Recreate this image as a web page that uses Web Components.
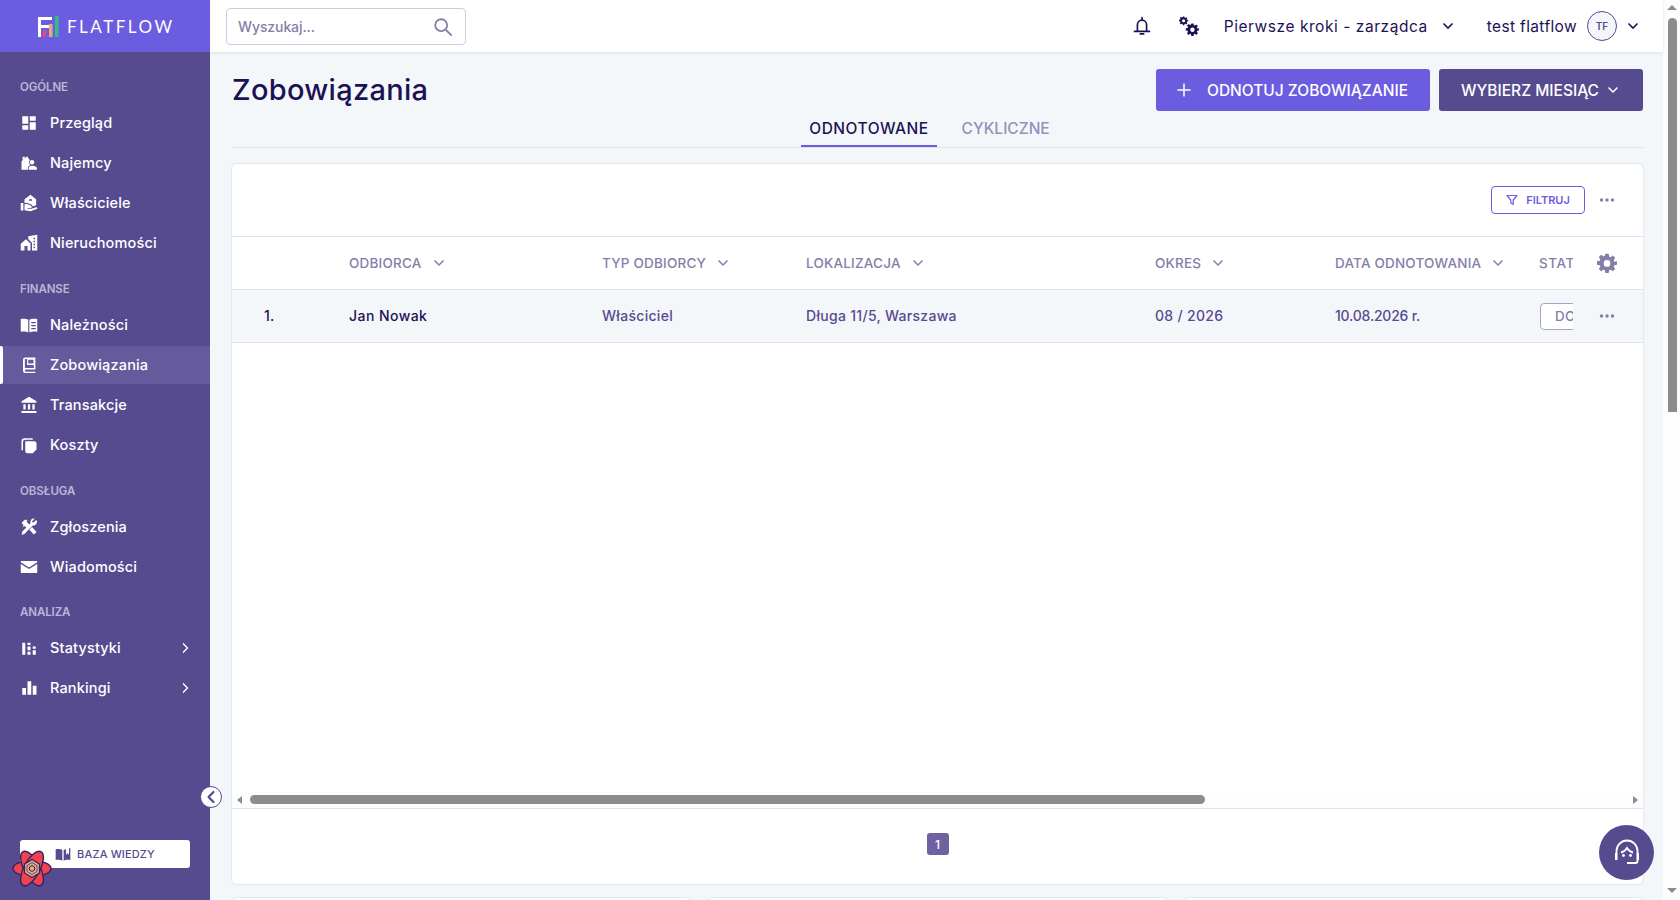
<!DOCTYPE html>
<html lang="pl">
<head>
<meta charset="utf-8">
<title>Zobowiązania</title>
<style>
  html, body { margin: 0; height: 100%; overflow: hidden; }
  body { font-family: Inter, "Liberation Sans", sans-serif; color: #1d1155; background: #f4f7fa; }
</style>
</head>
<body>
<ff-app>
  <ff-sidebar slot="side">
    <ff-nav-section label="OGÓLNE">
      <ff-nav-item icon="dash">Przegląd</ff-nav-item>
      <ff-nav-item icon="tenant">Najemcy</ff-nav-item>
      <ff-nav-item icon="owner">Właściciele</ff-nav-item>
      <ff-nav-item icon="estate">Nieruchomości</ff-nav-item>
    </ff-nav-section>
    <ff-nav-section label="FINANSE">
      <ff-nav-item icon="book">Należności</ff-nav-item>
      <ff-nav-item icon="ledger" active>Zobowiązania</ff-nav-item>
      <ff-nav-item icon="bank">Transakcje</ff-nav-item>
      <ff-nav-item icon="copy">Koszty</ff-nav-item>
    </ff-nav-section>
    <ff-nav-section label="OBSŁUGA" style="margin-bottom:17px">
      <ff-nav-item icon="tools">Zgłoszenia</ff-nav-item>
      <ff-nav-item icon="mail">Wiadomości</ff-nav-item>
    </ff-nav-section>
    <ff-nav-section label="ANALIZA">
      <ff-nav-item icon="stats" more>Statystyki</ff-nav-item>
      <ff-nav-item icon="rank" more>Rankingi</ff-nav-item>
    </ff-nav-section>
  </ff-sidebar>
  <ff-topbar slot="top"></ff-topbar>
  <ff-page-head slot="main" title="Zobowiązania"></ff-page-head>
  <ff-table-card slot="main"></ff-table-card>
  <ff-lower-cards slot="main"></ff-lower-cards>
</ff-app>
<ff-help-button></ff-help-button>

<script>
// shared icon paths, all on a 24x24 box
const GEAR = 'M10 1h4l.6 3.200 1.800.8 2.700-1.900 2.800 2.800-1.900 2.700.8 1.800L24 10v4l-3.200.6-.8 1.800 1.900 2.700-2.800 2.800-2.700-1.900-1.800.8L14 24h-4l-.6-3.200-1.800-.8-2.700 1.900-2.800-2.800 1.900-2.700-.8-1.800L0 14v-4l3.200-.6.8-1.800-1.900-2.700 2.800-2.800 2.700 1.900 1.800-.8zM12 8.500a4 4 0 1 0 0 8 4 4 0 0 0 0-8z';
const ICONS = {
  dash: '<path d="M3 3h8v10H3zM13 3h8v6h-8zM13 11h8v10h-8zM3 15h8v6H3z"/>',
  tenant: '<path d="M9.500 3 2 9.500V21h8.500v-2.500c0-2 1.800-3.400 3.400-4a4 4 0 0 1-2-3.500c0-1.100.4-2.100 1.100-2.800z"/><path d="M3.500 3.500h3v2.500l-3 2.500z"/><circle cx="16" cy="11" r="3"/><path d="M11.500 21v-2.500c0-2 2.500-3 4.500-3s6.500 1 6.500 3V21z"/>',
  owner: '<path d="M14 1 6 7v5l3-.5 6 2.500c1.200.6 1.600 1.500 1.500 2.500l5-1.500V7z"/><path d="M1 12h3.500v10H1zM6 13.500v8l8 1.500 9-3.500c0-1.500-1-2-2.500-1.500l-5.500 1.500H10v-1h4.500c1.500 0 1.500-2.500.3-3L9 13z"/><path fill="#574b90" d="M12 7h4v2h-4z"/>',
  estate: '<path d="M8 7 1 13v9h5v-6h4v6h4v-9.500z"/><path d="M11 6.500V3l12-2v21h-7V12zM18 5v2h2V5zM18 9v2h2V9zM18 13v2h2v-2zM18 17v2h2v-2z" fill-rule="evenodd"/>',
  book: '<path d="M11 5C8.500 3.500 4 3.200 1 4v17c3-.8 7.500-.5 10 1z"/><path fill-rule="evenodd" d="M12.500 5C15 3.500 20 3.200 23 4v17c-3-.8-8-.5-10.500 1zM15 8v1.500h6V8zM15 12v1.500h6V12zM15 16v1.500h6V16z"/>',
  ledger: '<path fill-rule="evenodd" d="M7 2h13.500v16H8a1.300 1.300 0 0 0 0 3h12.500v1.500H7a3 3 0 0 1-3-3V5a3 3 0 0 1 3-3zm4 3v5h7V5zM6.500 4v12.200c.4-.1.800-.2 1.500-.2h10.500v-4h-9V4z"/>',
  bank: '<path d="M12 1 2 7v2h20V7zM4.500 11v7h3v-7zM10.500 11v7h3v-7zM16.500 11v7h3v-7zM2 20h20v2.500H2z"/>',
  copy: '<path d="M8 7h11a3 3 0 0 1 3 3v8l-5 5H10a3 3 0 0 1-3-3V8a1 1 0 0 1 1-1z"/><path d="M6 3h11v2H7a3 3 0 0 0-3 3v11H2V7a4 4 0 0 1 4-4z"/>',
  tools: '<path d="M6.500 2 2 6.500l3 3L3.500 11l1 1L6 10.500l1.800 1.800L9.500 13.800l4-4-5-5L10 3.500 8.500 2 7.500 3z"/><path d="M12.500 15.500 16 12l6 6.500L18.500 22z"/><path d="M21.500 2.500 18 6l-1.500-.2-.3-1.500L19.500 1c-2.700-.8-6 1.300-5.700 4.700.1.700.2 1 .2 1.300L2.500 18.500 5.500 21.500 17 10c3.500.7 6-2.700 5.500-6z" /><path d="M3 18.500 5.500 22 2 22z"/>',
  mail: '<path d="M2 4h20c.6 0 1 .4 1 1v.7l-11 6.800L1 5.700V5c0-.6.400-1 1-1zM1 8l11 6.800L23 8v11c0 .6-.4 1-1 1H2c-.6 0-1-.4-1-1z"/>',
  stats: '<path d="M3 5h4v16H3zM10 10h4v5h-4zM10 17h4v4h-4zM10 5h4v3h-4zM17 10h4v3h-4zM17 15h4v6h-4z"/>',
  rank: '<path d="M3 12h5v9H3zM10 3h5v18h-5zM17 9h5v12h-5z"/>'
};

class FFApp extends HTMLElement {
  constructor() {
    super();
    this.attachShadow({ mode: 'open' });
    this.shadowRoot.innerHTML = `
      <style>
        :host { display: flex; width: 100vw; height: 900px; overflow: hidden; }
        #col { flex: 1; min-width: 0; display: flex; flex-direction: column; }
        main { flex: 1; min-height: 0; overflow: hidden; padding: 17px 20px 0 22px; }
      </style>
      <slot name="side"></slot>
      <div id="col">
        <slot name="top"></slot>
        <main><slot name="main"></slot></main>
      </div>
      <ff-page-scrollbar></ff-page-scrollbar>
    `;
  }
}

class FFSidebar extends HTMLElement {
  constructor() {
    super();
    this.attachShadow({ mode: 'open' });
    this.shadowRoot.innerHTML = `
      <style>
        :host { display: flex; flex-direction: column; position: relative; flex: 0 0 210px; width: 210px; height: 900px;
          background: #574b90; color: #fff; z-index: 2; }
        #logo { flex: 0 0 52px; background: #6c5ce0; display: flex; align-items: center; padding-left: 38px; gap: 8px; }
        #logo span { font: 400 17px Lato, Inter, sans-serif; letter-spacing: 2.500px; color: #fff; }
        nav { flex: 1; padding-top: 27px; }
        #kb { position: absolute; left: 20px; top: 840px; width: 170px; height: 28px; box-sizing: border-box; background: #fff; border-radius: 3px;
          display: flex; align-items: center; justify-content: center; gap: 6px; padding-left: 0; color: #574b90;
          font-size: 11px; font-weight: 500; letter-spacing: .15px; }
        #kb svg { width: 16px; height: 16px; fill: #574b90; }
        #atom { position: absolute; left: 12px; top: 850px; width: 40px; height: 37px; }
        #collapse { position: absolute; left: 200px; top: 786px; width: 22px; height: 22px; box-sizing: border-box; border-radius: 50%;
          background: #fff; border: 1.500px solid #574b90; display: flex; align-items: center; justify-content: center; }
      </style>
      <div id="logo">
        <svg width="21" height="21" viewBox="0 0 21 21">
          <path fill="#fff" d="M0 1h14v3H3v5h9v3H3v9H0z"/>
          <rect x="5" y="14" width="3" height="7" fill="#ef4860"/>
          <rect x="11" y="8" width="3.500" height="13" fill="#e9a97c"/>
          <rect x="17" y="0" width="3.500" height="21" fill="#2fc08a"/>
        </svg>
        <span>FLATFLOW</span>
      </div>
      <nav><slot></slot></nav>
      <div id="collapse">
        <svg width="12" height="14" viewBox="0 0 12 14"><path d="M8.500 2 3.500 7l5 5" fill="none" stroke="#574b90" stroke-width="2.200" stroke-linecap="round" stroke-linejoin="round"/></svg>
      </div>
      <div id="kb">
        <svg viewBox="0 0 24 24"><path d="M11 6C8.500 4.500 4 4.200 1 5v16c3-.8 7.500-.5 10 1z"/><path d="M13 6c1-.6 2.200-1 3.500-1.300V13l2.500-2 2 2V3.500h2V21c-3-.8-7.500-.5-10 1z"/></svg>
        <span>BAZA WIEDZY</span>
      </div>
      <svg id="atom" viewBox="0 0 40 37">
        <g stroke="#2a2466" stroke-width="1.400" fill="#f2414f" stroke-linejoin="round">
          <ellipse cx="20" cy="18.500" rx="19" ry="8" transform="rotate(0 20 18.500)"/>
          <ellipse cx="20" cy="18.500" rx="19" ry="8" transform="rotate(62 20 18.500)"/>
          <ellipse cx="20" cy="18.500" rx="19" ry="8" transform="rotate(-62 20 18.500)"/>
        </g>
        <g fill="#f2414f"><circle cx="20" cy="18.500" r="8"/></g>
        <g fill="none" stroke="#2a2466">
          <path d="M20 9.500l7.500 4.500v9L20 27.500 12.500 23v-9z" fill="#e9a97c" stroke-width="1.200"/>
          <path d="M20 12.500l5 3v6l-5 3-5-3v-6z" stroke="#574b90"/>
          <path d="M20 15.500l2.500 1.500v3L20 21.500 17.500 20v-3z" stroke-width="1"/>
        </g>
      </svg>
    `;
  }
}

class FFNavSection extends HTMLElement {
  constructor() {
    super();
    this.attachShadow({ mode: 'open' });
    this.shadowRoot.innerHTML = `
      <style>
        :host { display: block; margin-bottom: 18px; }
        h6 { margin: 0 0 8px; padding-left: 20px; height: 16px; line-height: 16px; font-size: 11.500px; font-weight: 600;
          color: #bcb6d6; letter-spacing: -.1px; }
      </style>
      <h6></h6>
      <slot></slot>
    `;
  }
  connectedCallback() {
    this.shadowRoot.querySelector('h6').textContent = this.getAttribute('label');
  }
}

class FFNavItem extends HTMLElement {
  constructor() {
    super();
    this.attachShadow({ mode: 'open' });
    this.shadowRoot.innerHTML = `
      <style>
        :host { display: block; height: 40px; }
        a { position: relative; display: flex; align-items: center; height: 100%; padding: 0 20px 1px; font-size: 14.500px; font-weight: 500; letter-spacing: .15px; color: #fff; box-sizing: border-box; }
        svg.ic { flex: 0 0 18px; width: 18px; height: 18px; fill: #fff; margin-right: 12px; }
        span { flex: 1; }
        svg.more { width: 8px; height: 12px; margin-right: 1px; }
        :host([active]) a::before { content: ''; position: absolute; left: 0; right: 0; background: #655a9c; top: 1px; bottom: 1px; }
        :host([active]) a::after { content: ''; position: absolute; left: 0; top: 1px; bottom: 1px; width: 3px; background: #fff; border-radius: 0 2px 2px 0; }
        svg, span { position: relative; z-index: 1; }
      </style>
      <a>
        <svg class="ic" viewBox="0 0 24 24"></svg>
        <span><slot></slot></span>
      </a>
    `;
  }
  connectedCallback() {
    this.shadowRoot.querySelector('svg.ic').innerHTML = ICONS[this.getAttribute('icon')] || '';
    if (this.hasAttribute('more')) {
      this.shadowRoot.querySelector('a').insertAdjacentHTML('beforeend',
        '<svg class="more" viewBox="0 0 8 12"><path d="M2 1.500 6.500 6 2 10.500" fill="none" stroke="#fff" stroke-width="1.400"/></svg>');
    }
  }
}

class FFTopbar extends HTMLElement {
  constructor() {
    super();
    this.attachShadow({ mode: 'open' });
    this.shadowRoot.innerHTML = `
      <style>
        :host { display: flex; align-items: center; flex: 0 0 52px; height: 52px; background: #fff; box-shadow: 0 1px 3px rgba(60,50,110,.12);
          position: relative; z-index: 1; padding: 0 24px 0 16px; font-size: 15.500px; color: #1d1155; box-sizing: border-box; }
        #search { width: 240px; height: 37px; margin-top: 1px; box-sizing: border-box; border: 1px solid #cfcbe2; border-radius: 4px; display: flex; align-items: center;
          justify-content: space-between; padding: 0 11px; color: #857ea8; font-size: 14px; font-weight: 500; letter-spacing: -.1px; }
        #search svg { display: block; width: 22px; height: 22px; }
        #right { margin-left: auto; display: flex; align-items: center; letter-spacing: .35px; }
        .chev { display: block; width: 12px; height: 8px; }
        #bell { width: 20px; height: 20px; display: block; margin-right: 27px; }
        #gears { width: 20px; height: 20px; display: block; margin-right: 25px; fill: #1d1155; }
        #ctx { margin-right: 14px; white-space: nowrap; letter-spacing: .55px; }
        #user { margin-left: 33px; white-space: nowrap; }
        #avatar { width: 30px; height: 30px; box-sizing: border-box; margin: 0 10px; border-radius: 50%; border: 1px solid #574b90; background: #f4f7fa;
          display: flex; align-items: center; justify-content: center; font-size: 10px; font-weight: 600; color: #574b90; letter-spacing: 0; }
      </style>
      <div id="search"><span>Wyszukaj...</span>
        <svg viewBox="0 0 24 24" fill="none" stroke="#857ea8" stroke-width="2"><circle cx="10" cy="10" r="6.500"/><path d="m15 15 6.500 6.500"/></svg>
      </div>
      <div id="right">
        <svg id="bell" viewBox="0 0 24 24" fill="none" stroke="#1d1155" stroke-width="2"><path d="M6.500 18v-7.500a5.500 5.500 0 0 1 11 0V18M3 18.500h18" stroke-linecap="round"/><path d="M10 21.500h4M12 2v3" stroke-linecap="round"/></svg>
        <svg id="gears" viewBox="0 0 24 24">
          <path fill-rule="evenodd" transform="translate(0 0) scale(.46)" d="${GEAR}"/>
          <path fill-rule="evenodd" transform="translate(8.200 8.200) scale(.66)" d="${GEAR}"/>
        </svg>
        <span id="ctx">Pierwsze kroki - zarządca</span>
        <svg class="chev" viewBox="0 0 12 8"><path d="M1.500 1.500 6 6l4.500-4.500" fill="none" stroke="#1d1155" stroke-width="1.600"/></svg>
        <span id="user">test flatflow</span>
        <div id="avatar">TF</div>
        <svg class="chev" viewBox="0 0 12 8"><path d="M1.500 1.500 6 6l4.500-4.500" fill="none" stroke="#1d1155" stroke-width="1.600"/></svg>
      </div>
    `;
  }
}

class FFPageHead extends HTMLElement {
  constructor() {
    super();
    this.attachShadow({ mode: 'open' });
    this.shadowRoot.innerHTML = `
      <style>
        :host { display: block; border-bottom: 1px solid #dfe0ea; }
        #row { display: flex; align-items: center; justify-content: space-between; height: 42px; }
        h1 { margin: 0; font-size: 29px; font-weight: 500; color: #1d1155; letter-spacing: .3px; position: relative; top: -1px; }
        #btns { display: flex; gap: 9px; }
        .btn { height: 42px; box-sizing: border-box; border-radius: 3px; color: #fff; display: flex; align-items: center; font-size: 15.500px; font-weight: 500; white-space: nowrap; }
        #add { width: 274px; background: #6c5ce0; padding-left: 20px; gap: 15px; }
        #month { width: 204px; background: #574b90; padding-left: 22px; gap: 8px; }
        nav { display: flex; justify-content: center; height: 36px; gap: 17px; padding-right: 16px; }
        .tab { padding: 0 8px; height: 36px; box-sizing: border-box; line-height: 36px; font-size: 15.500px; font-weight: 500; color: #998fb8; }
        .tab.on { color: #1d1155; border-bottom: 2px solid #6c5ce0; letter-spacing: .5px; }
      </style>
      <div id="row">
        <h1></h1>
        <div id="btns">
          <div class="btn" id="add">
            <svg width="16" height="16" viewBox="0 0 16 16"><path d="M8 1.500v13M1.500 8h13" stroke="#fff" stroke-width="1.500"/></svg>
            <span>ODNOTUJ ZOBOWIĄZANIE</span>
          </div>
          <div class="btn" id="month">
            <span>WYBIERZ MIESIĄC</span>
            <svg width="12" height="8" viewBox="0 0 12 8"><path d="M1.500 1.500 6 6l4.500-4.500" fill="none" stroke="#fff" stroke-width="1.500"/></svg>
          </div>
        </div>
      </div>
      <nav>
        <div class="tab on">ODNOTOWANE</div>
        <div class="tab">CYKLICZNE</div>
      </nav>
    `;
  }
  connectedCallback() {
    this.shadowRoot.querySelector('h1').textContent = this.getAttribute('title');
  }
}

const COLS = '117px 253px 204px 349px 180px 204px 34px 70px';
const DOTS = '<svg width="16" height="4" viewBox="0 0 16 4" fill="#857ea8"><circle cx="2.500" cy="2" r="1.700"/><circle cx="8" cy="2" r="1.700"/><circle cx="13.500" cy="2" r="1.700"/></svg>';
const CHEV = '<svg width="12" height="8" viewBox="0 0 12 8"><path d="M1.500 1.500 6 6l4.500-4.500" fill="none" stroke="#857ea8" stroke-width="1.500"/></svg>';

class FFTableCard extends HTMLElement {
  constructor() {
    super();
    this.attachShadow({ mode: 'open' });
    this.shadowRoot.innerHTML = `
      <style>
        :host { display: flex; flex-direction: column; height: 720px; box-sizing: border-box; margin-top: 16px; background: #fff; border-radius: 5px;
          box-shadow: 0 0 2px rgba(60,50,110,.25); overflow: hidden; }
        #tools { flex: 0 0 72px; display: flex; align-items: center; justify-content: flex-end; padding-right: 28px; gap: 14px; box-sizing: border-box; }
        #filter { width: 94px; height: 28px; box-sizing: border-box; border: 1px solid #6c5ce0; border-radius: 4px; color: #6c5ce0; font-size: 11px; font-weight: 600;
          display: flex; align-items: center; justify-content: center; gap: 8px; }
        .row { display: grid; grid-template-columns: ${COLS}; align-items: center; border-top: 1px solid #e2e1ec; box-sizing: border-box; }
        #head { height: 53px; font-size: 13.500px; font-weight: 500; letter-spacing: .2px; color: #857ea8; }
        #head > div { display: flex; align-items: center; gap: 11px; white-space: nowrap; }
        #head > div.clip { letter-spacing: .6px; }
        #body { background: #f4f7fa; border-bottom: 1px solid #e2e1ec; font-size: 14px; font-weight: 500; letter-spacing: .3px; color: #574b90; height: 54px; }
        #body > div:not(.clip):not(.act) { padding-bottom: 2px; }
        .num { padding-left: 32px; color: #1d1155; }
        .name { color: #1d1155; letter-spacing: .45px; }
        .date { letter-spacing: -.2px; }
        .clip { overflow: hidden; }
        #badge { width: 60px; height: 27px; box-sizing: border-box; border: 1px solid #a9a4c4; border-radius: 4px 0 0 4px; background: #fff; color: #857ea8; font-size: 13.500px;
          display: flex; align-items: center; padding-left: 14px; }
        .act { display: flex; justify-content: flex-start; padding-left: 26px; }
        .act.gear { padding-left: 24px; }
        #space { flex: 1; }
        #pager { flex: 0 0 76px; box-sizing: border-box; border-top: 1px solid #e2e1ec; padding-bottom: 5px; display: flex; align-items: center; justify-content: center; }
        #pg { width: 22px; height: 22px; border-radius: 3px; background: #6f619f; color: #fff; font-size: 12px; font-weight: 500;
          display: flex; align-items: center; justify-content: center; }
      </style>
      <div id="tools">
        <div id="filter">
          <svg width="12" height="12" viewBox="0 0 12 12"><path d="M1 1.500h10L7.200 6v4.500L4.800 9V6z" fill="none" stroke="#6c5ce0" stroke-width="1.200" stroke-linejoin="round"/></svg>
          FILTRUJ
        </div>
        ${DOTS}
      </div>
      <div class="row" id="head">
        <div></div>
        <div>ODBIORCA ${CHEV}</div>
        <div>TYP ODBIORCY ${CHEV}</div>
        <div>LOKALIZACJA ${CHEV}</div>
        <div>OKRES ${CHEV}</div>
        <div>DATA ODNOTOWANIA ${CHEV}</div>
        <div class="clip">STATUS</div>
        <div class="act gear"><svg width="20" height="20" viewBox="0 0 24 24" fill="#857ea8"><path fill-rule="evenodd" d="${GEAR}"/></svg></div>
      </div>
      <div class="row" id="body">
        <div class="num">1.</div>
        <div class="name">Jan Nowak</div>
        <div>Właściciel</div>
        <div>Długa 11/5, Warszawa</div>
        <div>08 / 2026</div>
        <div class="date">10.08.2026 r.</div>
        <div class="clip" style="margin-left:1px"><div id="badge">DO</div></div>
        <div class="act">${DOTS}</div>
      </div>
      <div id="space"></div>
      <ff-h-scrollbar></ff-h-scrollbar>
      <div id="pager"><div id="pg">1</div></div>
    `;
  }
}

class FFHScrollbar extends HTMLElement {
  constructor() {
    super();
    this.attachShadow({ mode: 'open' });
    this.shadowRoot.innerHTML = `
      <style>
        :host { display: flex; align-items: center; flex: 0 0 17px; height: 17px; background: #fdfdfd; padding: 0 5px; box-sizing: border-box; }
        #thumb { height: 9px; width: 955px; margin-left: 8px; border-radius: 5px; background: #8c8c8c; }
        .l { width: 0; height: 0; border: 4px solid transparent; border-left: 0; border-right: 5px solid #8c8c8c; }
        .r { width: 0; height: 0; border: 4px solid transparent; border-right: 0; border-left: 5px solid #8c8c8c; margin-left: auto; }
      </style>
      <span class="l"></span><div id="thumb"></div><span class="r"></span>
    `;
  }
}

class FFLowerCards extends HTMLElement {
  constructor() {
    super();
    this.attachShadow({ mode: 'open' });
    this.shadowRoot.innerHTML = `
      <style>
        :host { display: grid; grid-template-columns: 459px 460px 459px; gap: 16.500px; margin-top: 14px; height: 100px; }
        div { background: #fff; border-radius: 5px; box-shadow: 0 0 2px rgba(60,50,110,.25); }
      </style>
      <div></div><div></div><div></div>
    `;
  }
}

class FFPageScrollbar extends HTMLElement {
  constructor() {
    super();
    this.attachShadow({ mode: 'open' });
    this.shadowRoot.innerHTML = `
      <style>
        :host { display: flex; flex-direction: column; flex: 0 0 17px; width: 17px; height: 900px; background: #fdfdfd; align-items: center; box-sizing: border-box; padding: 5px 0 7px 1px; }
        .u { width: 0; height: 0; border: 5px solid transparent; border-top: 0; border-bottom: 5px solid #8c8c8c; }
        .d { width: 0; height: 0; border: 5px solid transparent; border-bottom: 0; border-top: 5px solid #8c8c8c; margin-top: auto; }
        #thumb { width: 9px; height: 394px; margin-top: 8px; border-radius: 5px 5px 0 0; background: #8c8c8c; }
      </style>
      <span class="u"></span><div id="thumb"></div><span class="d"></span>
    `;
  }
}

class FFHelpButton extends HTMLElement {
  constructor() {
    super();
    this.attachShadow({ mode: 'open' });
    this.shadowRoot.innerHTML = `
      <style>
        :host { position: fixed; left: 1599px; top: 825px; width: 55px; height: 55px; border-radius: 50%; background: #574b90;
          display: flex; align-items: center; justify-content: center; z-index: 5; }
      </style>
      <svg width="30" height="30" viewBox="0 0 30 30" fill="none" stroke="#fff">
        <path d="M4.500 16v-3a10.500 10.500 0 0 1 21 0v3" stroke-width="1.800"/>
        <path d="M3 15h2.500v7H3zM24.500 15H27v7h-2.500z" fill="#fff" stroke="none"/>
        <path d="M9 14.500c2.500-.5 4.500-2 6-4.500 1.500 2.500 3.500 4 6 4.500" stroke-width="1.800"/>
        <circle cx="11.500" cy="17.500" r="1.400" fill="#fff" stroke="none"/>
        <circle cx="18.500" cy="17.500" r="1.400" fill="#fff" stroke="none"/>
        <path d="M25.500 22v1c0 1.500-1 2-2 2H15" stroke-width="1.800"/>
      </svg>
    `;
  }
}

customElements.define('ff-app', FFApp);
customElements.define('ff-sidebar', FFSidebar);
customElements.define('ff-nav-section', FFNavSection);
customElements.define('ff-nav-item', FFNavItem);
customElements.define('ff-topbar', FFTopbar);
customElements.define('ff-page-head', FFPageHead);
customElements.define('ff-table-card', FFTableCard);
customElements.define('ff-h-scrollbar', FFHScrollbar);
customElements.define('ff-lower-cards', FFLowerCards);
customElements.define('ff-page-scrollbar', FFPageScrollbar);
customElements.define('ff-help-button', FFHelpButton);
</script>
</body>
</html>
